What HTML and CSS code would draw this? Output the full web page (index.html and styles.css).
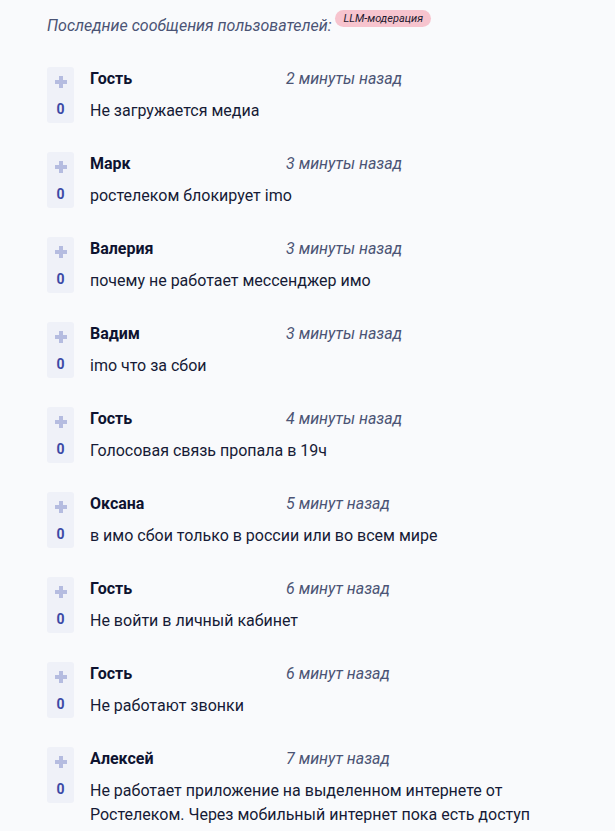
FILE: index.html
```html
<!DOCTYPE html>
<html lang="ru">
<head>
<meta charset="utf-8">
<link rel="stylesheet" href="styles.css">
</head>
<body>
<div class="wrap">
  <div class="title">Последние сообщения пользователей: <span class="badge">LLM-модерация</span></div>
  <ul class="list">
    <li class="item"><div class="vote"><span class="plus"></span><span class="num">0</span></div><div class="body"><div class="head"><span class="name">Гость</span><span class="time">2 минуты назад</span></div><div class="msg">Не загружается медиа</div></div></li>
    <li class="item"><div class="vote"><span class="plus"></span><span class="num">0</span></div><div class="body"><div class="head"><span class="name">Марк</span><span class="time">3 минуты назад</span></div><div class="msg">ростелеком блокирует imo</div></div></li>
    <li class="item"><div class="vote"><span class="plus"></span><span class="num">0</span></div><div class="body"><div class="head"><span class="name">Валерия</span><span class="time">3 минуты назад</span></div><div class="msg">почему не работает мессенджер имо</div></div></li>
    <li class="item"><div class="vote"><span class="plus"></span><span class="num">0</span></div><div class="body"><div class="head"><span class="name">Вадим</span><span class="time">3 минуты назад</span></div><div class="msg">imo что за сбои</div></div></li>
    <li class="item"><div class="vote"><span class="plus"></span><span class="num">0</span></div><div class="body"><div class="head"><span class="name">Гость</span><span class="time">4 минуты назад</span></div><div class="msg">Голосовая связь пропала в 19ч</div></div></li>
    <li class="item"><div class="vote"><span class="plus"></span><span class="num">0</span></div><div class="body"><div class="head"><span class="name">Оксана</span><span class="time">5 минут назад</span></div><div class="msg">в имо сбои только в россии или во всем мире</div></div></li>
    <li class="item"><div class="vote"><span class="plus"></span><span class="num">0</span></div><div class="body"><div class="head"><span class="name">Гость</span><span class="time">6 минут назад</span></div><div class="msg">Не войти в личный кабинет</div></div></li>
    <li class="item"><div class="vote"><span class="plus"></span><span class="num">0</span></div><div class="body"><div class="head"><span class="name">Гость</span><span class="time">6 минут назад</span></div><div class="msg">Не работают звонки</div></div></li>
    <li class="item"><div class="vote"><span class="plus"></span><span class="num">0</span></div><div class="body"><div class="head"><span class="name">Алексей</span><span class="time">7 минут назад</span></div><div class="msg">Не работает приложение на выделенном интернете от Ростелеком. Через мобильный интернет пока есть доступ</div></div></li>
  </ul>
</div>
</body>
</html>
```
FILE: styles.css
```css
html, body {
  margin: 0;
  padding: 0;
  background: #f9fafc;
}
body {
  font-family: Roboto, "Noto Sans", sans-serif;
  color: #141a33;
}
.wrap {
  padding: 10px 0 0 47px;
  width: 500px;
}
.title {
  font-style: italic;
  font-size: 16px;
  line-height: 24px;
  color: #4b5475;
}
.badge {
  display: inline-block;
  vertical-align: 9px;
  margin-left: 0;
  padding: 0 8px;
  height: 17px;
  line-height: 17px;
  border-radius: 9px;
  background: #f7c4ce;
  color: #1d1a2e;
  font-size: 11px;
  font-style: italic;
}
.list {
  list-style: none;
  margin: 29px 0 0 0;
  padding: 0;
  display: flex;
  flex-direction: column;
  gap: 29px;
}
.item {
  display: flex;
  gap: 16px;
  align-items: flex-start;
}
.vote {
  flex: 0 0 27px;
  height: 56px;
  background: #eff1f8;
  border-radius: 3px;
  display: flex;
  flex-direction: column;
  align-items: center;
}
.plus {
  position: relative;
  width: 12px;
  height: 12px;
  margin-top: 9px;
}
.plus::before, .plus::after {
  content: "";
  position: absolute;
  background: #b5bce0;
}
.plus::before {
  left: 4px;
  top: 0;
  width: 4px;
  height: 12px;
}
.plus::after {
  left: 0;
  top: 4px;
  width: 12px;
  height: 4px;
}
.num {
  margin-top: 13px;
  font-weight: 700;
  font-size: 14px;
  line-height: 16px;
  color: #3c4aa6;
}
.body {
  flex: 1;
  padding-top: 1px;
}
.head {
  display: flex;
  height: 22px;
  line-height: 22px;
}
.name {
  width: 196px;
  font-weight: 700;
  font-size: 16px;
  color: #0e1330;
}
.time {
  font-style: italic;
  font-size: 16px;
  color: #4b5475;
}
.msg {
  margin-top: 9px;
  font-size: 16px;
  line-height: 24px;
  color: #161b36;
}
```
